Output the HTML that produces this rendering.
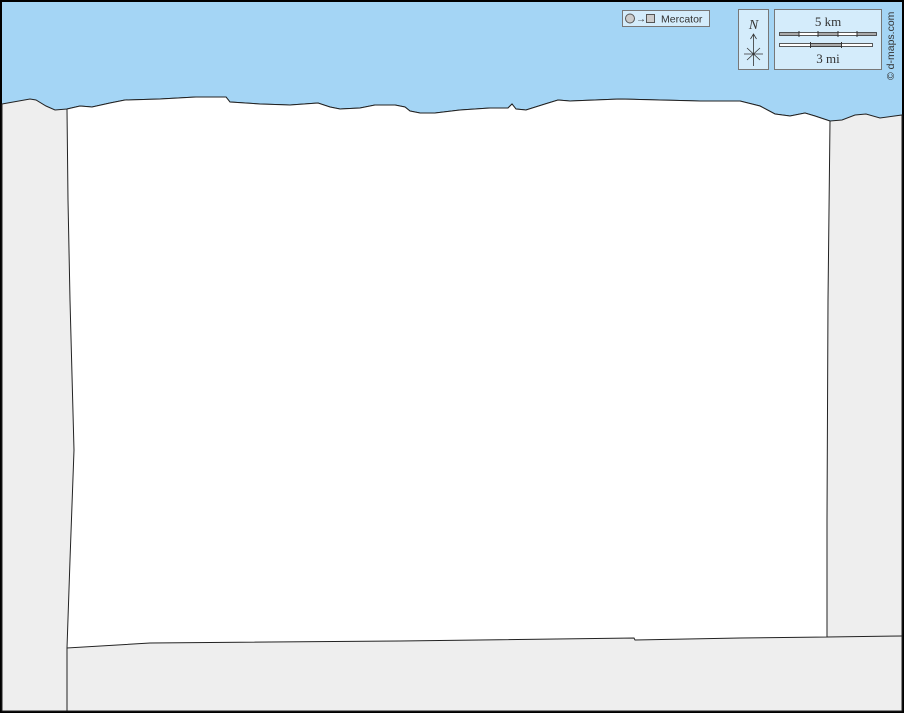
<!DOCTYPE html>
<html><head><meta charset="utf-8"><style>
html,body{margin:0;padding:0;background:#000;}
svg{display:block;}
text{font-family:"Liberation Sans",sans-serif;}
text.serif{font-family:"Liberation Serif",serif;}
</style></head><body>
<svg width="904" height="713" viewBox="0 0 904 713" xmlns="http://www.w3.org/2000/svg">
<rect x="0" y="0" width="904" height="713" fill="#000"/>
<rect x="2" y="2" width="900" height="709" fill="#a4d5f5"/>
<path d="M2,104 L30,99 L36,100 L46,106 L55,110 L67,109 L80,106 L92,107 L110,103 L125,100 L160,99 L196,97 L226,97 L230,102 L260,104 L290,105 L318,103 L330,107 L340,109 L360,108 L375,105 L395,105 L405,107 L410,111 L420,113 L435,113 L460,110 L490,108 L508,108 L512,104 L516,109 L526,110 L545,104 L558,100 L570,101 L620,99 L660,100 L700,101 L740,101 L760,106 L775,114 L790,116 L805,113 L815,116 L830,121 L842,120 L855,115 L866,114 L880,118 L902,115 L902,711 L2,711 Z" fill="#eeeeee" stroke="#222" stroke-width="1"/>
<path d="M67,109 L80,106 L92,107 L110,103 L125,100 L160,99 L196,97 L226,97 L230,102 L260,104 L290,105 L318,103 L330,107 L340,109 L360,108 L375,105 L395,105 L405,107 L410,111 L420,113 L435,113 L460,110 L490,108 L508,108 L512,104 L516,109 L526,110 L545,104 L558,100 L570,101 L620,99 L660,100 L700,101 L740,101 L760,106 L775,114 L790,116 L805,113 L815,116 L830,121 L828,300 L827,520 L827,637 L740,638 L635,640 L634,638 L400,641 L150,643 L67,648 L70,560 L74,450 L70,300 L68,200 Z" fill="#fff" stroke="#222" stroke-width="1"/>
<path d="M67,648 L67,711" stroke="#222" stroke-width="1" fill="none"/>
<path d="M827,637 L902,636" stroke="#222" stroke-width="1" fill="none"/>
<rect x="622.5" y="10.5" width="87" height="16" fill="#d4ecfb" stroke="#777"/>
<circle cx="630" cy="18.5" r="4.5" fill="#ccc" stroke="#555"/>
<text x="636" y="22" font-size="10" fill="#333">→</text>
<rect x="646.5" y="14.5" width="8" height="8" fill="#ccc" stroke="#555"/>
<text x="661" y="22.5" font-size="10.5" fill="#333">Mercator</text>
<rect x="738.5" y="9.5" width="30" height="60" fill="#d4ecfb" stroke="#777"/>
<text class="serif" x="753.5" y="29" font-size="14" font-style="italic" text-anchor="middle" fill="#333">N</text>
<path d="M753.5,35 L753.5,66 M750.5,39 L753.5,34 L756.5,39 M744,54 L763,54 M747,48 L760,60 M760,48 L747,60" stroke="#333" stroke-width="0.8" fill="none"/>
<rect x="774.5" y="9.5" width="107" height="60" fill="#d4ecfb" stroke="#777"/>
<text class="serif" x="828" y="26" font-size="13" text-anchor="middle" fill="#333">5 km</text>
<rect x="779.5" y="32.5" width="97" height="3" fill="#fff"/>
<rect x="779.5" y="32.5" width="19.4" height="3" fill="#aaa"/>
<rect x="818.3" y="32.5" width="19.4" height="3" fill="#aaa"/>
<rect x="857.1" y="32.5" width="19.4" height="3" fill="#aaa"/>
<rect x="779.5" y="32.5" width="97" height="3" fill="none" stroke="#333" stroke-width="0.8"/>
<path d="M799,31 V37 M818,31 V37 M838,31 V37 M857,31 V37" stroke="#333" stroke-width="1"/>
<rect x="779.5" y="43.5" width="93" height="3" fill="#fff" stroke="#333" stroke-width="0.8"/>
<rect x="810.5" y="43.5" width="31" height="3" fill="#aaa" stroke="#333" stroke-width="0.8"/>
<path d="M810.5,42 V48 M841.5,42 V48" stroke="#333" stroke-width="1"/>
<text class="serif" x="828" y="63" font-size="13" text-anchor="middle" fill="#333">3 mi</text>
<text transform="translate(894,80) rotate(-90)" font-size="10.5" fill="#333">© d-maps.com</text>
</svg>
</body></html>
